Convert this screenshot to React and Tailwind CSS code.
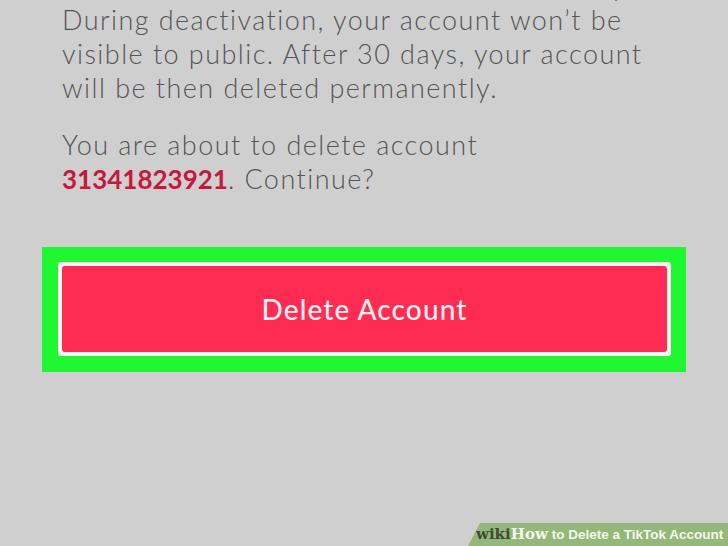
import React from 'react';

const App = () => {
    return (
        <div className="relative w-[728px] h-[546px] overflow-hidden bg-[#cfcfcf] font-['Lato','Open_Sans',sans-serif]">
            <div className="pl-[62px] text-[27px] font-light leading-[34px] tracking-[1.45px] text-[#555555] whitespace-nowrap">
                <p className="-mt-[31px]">Your account will be deactivated for 30 day</p>
                <p>
                    During deactivation, your account won’t be
                    <br />
                    visible to public. After 30 days, your account
                    <br />
                    will be then deleted permanently.
                </p>
                <p className="mt-[23px]">
                    You are about to delete account
                    <br />
                    <span className="text-[26px] font-bold tracking-normal text-[#c8163c]">31341823921</span>. Continue?
                </p>
            </div>

            <div className="mt-[51px] ml-[42px] w-[644px] bg-[#1ff731] pt-[15px] pb-[16px] pl-[16px] pr-[15px]">
                <div className="rounded-[3px] bg-[#fbf7f2] p-[4px]">
                    <button className="flex h-[86px] w-full items-center justify-center rounded-[3px] bg-[#fe2c53] text-[28px] font-medium tracking-[1.1px] text-[#fbeef0]">
                        Delete Account
                    </button>
                </div>
            </div>

            {/* wikiHow caption */}
            <div className="absolute bottom-0 right-0 flex h-[23px] w-[260px] items-center bg-[#93b879] pl-[8px] [clip-path:polygon(12px_0,100%_0,100%_100%,0_100%)]">
                <span className="font-['DejaVu_Serif',serif] text-[15px] font-bold leading-none text-[#3f4a38]">wiki</span>
                <span className="font-['DejaVu_Serif',serif] text-[15px] font-bold leading-none text-[#f4f7ef]">How</span>
                <span className="ml-[4px] font-['Liberation_Sans',sans-serif] text-[13.5px] font-bold leading-none text-[#f4f7ef]">
                    to Delete a TikTok Account
                </span>
            </div>
        </div>
    );
};

export default App;
